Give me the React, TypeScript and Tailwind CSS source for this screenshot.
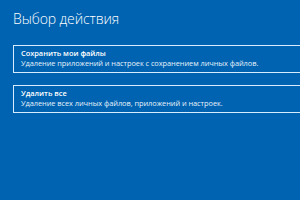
import React from 'react';

const options = [
  { title: 'Сохранить мои файлы', desc: 'Удаление приложений и настроек с сохранением личных файлов.' },
  { title: 'Удалить все', desc: 'Удаление всех личных файлов, приложений и настроек.' },
];

export default function App() {
  return (
    <div className="w-[300px] h-[200px] overflow-hidden bg-[#0063b1] text-white font-['Open_Sans',sans-serif]">
      <div className="pl-[13px] pt-[9px]">
        <h1 className="text-[14px] font-light leading-[20px] tracking-[-0.1px]">Выбор действия</h1>
        <div className="mt-[16px] flex flex-col gap-[12px]">
          {options.map((o) => (
            <div key={o.title} className="w-[320px] h-[28px] border-[1.5px] border-[#d8ecff] pl-[7px] pt-[2px]">
              <div className="text-[7.4px] font-semibold leading-[10px]">{o.title}</div>
              <div className="text-[7.4px] leading-[11px] tracking-[-0.05px] text-[#e6f1fb]">{o.desc}</div>
            </div>
          ))}
        </div>
      </div>
    </div>
  );
}
